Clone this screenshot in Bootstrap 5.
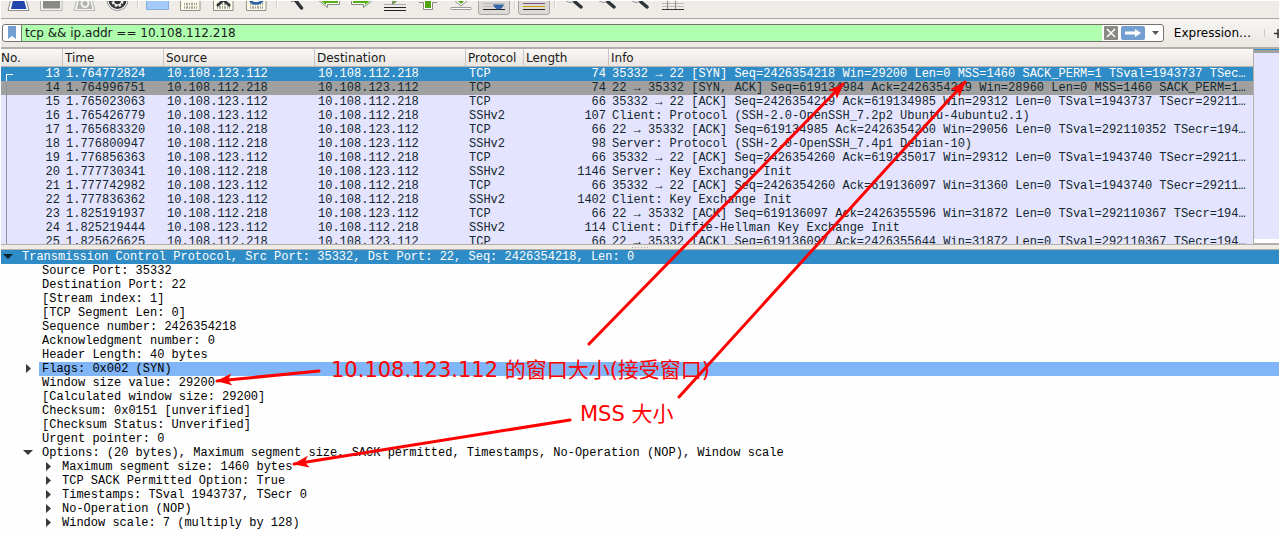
<!DOCTYPE html>
<html lang="en">
<head>
<meta charset="utf-8">
<meta name="viewport" content="width=device-width, initial-scale=1">
<title>Packet capture</title>
<link href="https://cdn.jsdelivr.net/npm/bootstrap@5.3.0/dist/css/bootstrap.min.css" rel="stylesheet">
<style>
  :root { --sel: #308cc6; --edge: #b4afa9; --chrome: #efebe7; --tcp: #e4e4ff; --ink: #12272e; }
  body { font: 12px/17px "DejaVu Sans", "Noto Sans CJK SC", sans-serif; color: #1a1a1a; background: #fefefe; padding: 1px 0 0 1px; overflow: hidden; }
  .toolbar { background: #efece8; border-bottom: 1px solid #aaa6a2; height: 18px; padding-left: 1px; overflow: hidden; }
  .tool { width: 33px; height: 17px; padding: 0; border: 0; background: none; }
  .tool svg { display: block; width: 33px; height: 17px; }
  .split { width: 7px; height: 9px; }
  .split::after { content: ""; display: block; width: 2px; height: 8px; margin-left: 3px; background: #fff; border-left: 1px solid #cfcac5; }
  .filterbar { background: linear-gradient(#f7f5f3, #ebe7e3); border-bottom: 2px solid var(--edge); height: 30px; padding: 0 0 0 1px; }
  .filterbox { border: 1px solid #76736f; border-radius: 3px; background: #fff; height: 18px; min-width: 0; overflow: hidden; }
  .filterbox input { border: 0; border-left: 1px solid #76736f; border-radius: 0; background: #afffaf; font: inherit; color: #1a1a1a; padding: 0 3px; height: 16px; min-width: 0; outline: 0; }
  .mini { border: 0; padding: 0; background: none; line-height: 0; }
  .expr { padding: 0 12px 0 2px; line-height: 18px; }
  .packets { height: 195px; }
  .listpane { width: 0; overflow: hidden; background: var(--tcp); border-right: 1px solid var(--edge); }
  .plist { width: 100%; table-layout: fixed; border-collapse: separate; border-spacing: 0; }
  .plist th { font-weight: 400; height: 18px; line-height: 16px; padding: 0 2px; border-right: 1px solid #cbc6c1; border-bottom: 1px solid #bab5b0; background: linear-gradient(#faf8f6, #e9e5e1); white-space: nowrap; }
  .plist th:first-child { padding-left: 0; }
  .plist th:last-child { border-right: 0; }
  .plist td { font: 12px/14px "Liberation Mono", monospace; height: 14px; padding: 0 3px; color: var(--ink); white-space: nowrap; overflow: hidden; text-overflow: ellipsis; }
  .plist .sel td { background: var(--sel); color: #fff; }
  .plist .synack td { background: #a0a0a0; }
  .c-no { width: 62px; } .c-time { width: 101px; } .c-addr { width: 151px; } .c-proto { width: 58px; } .c-len { width: 85px; }
  .plist td:first-child { position: relative; }
  .convo { position: absolute; left: 5px; top: 0; width: 7px; height: 14px; border-left: 1px solid #8a949c; }
  .sel .convo { top: 7px; height: 7px; border-color: #fff; border-top: 1px solid #fff; }
  .minimap { width: 25px; background: var(--tcp); border-top: 1px solid var(--sel); border-bottom: 1px solid var(--edge); }
  .minimap::before { content: ""; display: block; height: 3px; background: #a0a0a0; }
  .minimap::after { content: ""; display: block; height: 4px; background: #fff; }
  .grip { height: 6px; background: var(--chrome); border: solid var(--edge); border-width: 1px 0; }
  .grip span { width: 16px; height: 1px; background: repeating-linear-gradient(90deg, #aaa 0 1px, transparent 1px 3px); }
  .details { list-style: none; margin: 0; padding: 0; font: 12px/14px "Liberation Mono", monospace; color: #000; }
  .node { height: 14px; line-height: 14px; white-space: nowrap; }
  .twist { border: 0; background: none; padding: 0; width: 14px; height: 14px; color: #3a3a3a; line-height: 0; }
  .twist svg { display: block; }
  .lv0 { background: var(--sel); color: #fff; }
  .lv0 .twist { color: #0b2433; }
  .lv0 .txt { padding-left: 7px; }
  .lv1 .twist { margin-left: 20px; }
  .lv1 .txt { margin-left: 4px; padding-left: 3px; }
  .lv1.leaf .txt { margin-left: 38px; }
  .lv2 .twist { margin-left: 40px; }
  .lv2 .txt { padding-left: 7px; }
  .hot { background: #80b5f7; }
  .marks { position: absolute; left: 0; top: 0; pointer-events: none; }
  .note { position: absolute; color: #f00; font-size: 21px; line-height: 28px; white-space: nowrap; }
  .note-win { left: 331px; top: 356px; }
  .note-mss { left: 580px; top: 400px; }
</style>
</head>
<body class="position-relative">

<div class="toolbar d-flex" role="toolbar" aria-label="Capture tools">
  <button class="tool" aria-label="Start capture"><svg viewBox="0 1 33 17"><path d="M9 -1L6 10.500H27L24 -1Z" fill="#fff" stroke="#8b8b8b"/><path d="M11 0L9 9H24.500L22 0Z" fill="#2145ad"/></svg></button>
  <button class="tool" aria-label="Stop capture"><svg viewBox="0 1 33 17"><path d="M5.500 0V10.500H27V0" fill="#f3f3f1" stroke="#b3b3b0"/><path d="M8 0H25V8.500H8Z" fill="#898985"/></svg></button>
  <button class="tool" aria-label="Restart capture"><svg viewBox="0 1 33 17"><path d="M9 -1L6 10.500H27L24 -1Z" fill="#f3f3f1" stroke="#b8b8b4"/><path d="M11 0L9 9H24.500L22 0Z" fill="#b3b3af"/><circle cx="17" cy="3.500" r="3.500" fill="none" stroke="#f2f2ee" stroke-width="2"/></svg></button>
  <button class="tool" aria-label="Capture options"><svg viewBox="0 1 33 17"><circle cx="16.500" cy="0" r="10.500" fill="#fff" stroke="#8d8d8d"/><circle cx="16.500" cy="0" r="9" fill="#333"/><circle cx="16.500" cy="1" r="5" fill="none" stroke="#eee" stroke-width="2" stroke-dasharray="2.500 1.500"/><circle cx="16.500" cy="1" r="4" fill="none" stroke="#eee" stroke-width="1.500"/></svg></button>
  <span class="split"></span>
  <button class="tool" aria-label="Open"><svg viewBox="0 1 33 17"><path d="M5.500 0V9.500H27.500V0" fill="#a3caf9" stroke="#84aedf"/></svg></button>
  <button class="tool" aria-label="Save"><svg viewBox="0 1 33 17"><path d="M6.500 0V10.500H26V0" fill="#fbfbe8" stroke="#8f8f88"/><path d="M10 4H23M10 7.500H23" stroke="#a2a29a" stroke-width="2.500" stroke-dasharray="1 1 2 1"/></svg></button>
  <button class="tool" aria-label="Close"><svg viewBox="0 1 33 17"><path d="M6.500 0V10.500H26V0" fill="#fbfbe8" stroke="#8f8f88"/><path d="M10 4H23M10 7.500H23" stroke="#a2a29a" stroke-width="2.500" stroke-dasharray="1 1 2 1"/><path d="M10 6L16.500 0L23 6" fill="none" stroke="#2c3437" stroke-width="2.500"/></svg></button>
  <button class="tool" aria-label="Reload"><svg viewBox="0 1 33 17"><path d="M6.500 0V10.500H26V0" fill="#fbfbe8" stroke="#8f8f88"/><path d="M10 4H23M10 7.500H23" stroke="#a2a29a" stroke-width="2.500" stroke-dasharray="1 1 2 1"/><path d="M9.500 -1A7 6 0 0 0 23 -1" fill="none" stroke="#2f5fa5" stroke-width="2.500"/></svg></button>
  <span class="split"></span>
  <button class="tool" aria-label="Find packet"><svg viewBox="0 1 33 17"><path d="M11 1.500H14" stroke="#999"/><path d="M16 1L21.500 8" stroke="#2d3538" stroke-width="3.500" stroke-linecap="round"/></svg></button>
  <button class="tool" aria-label="Previous packet"><svg viewBox="0 1 33 17"><path d="M5 0L14.500 7.500V4.500H26.500V0" fill="#fff" stroke="#858b80"/><path d="M7 0L13 5V3H25V0Z" fill="#55b010"/></svg></button>
  <button class="tool" aria-label="Next packet"><svg viewBox="0 1 33 17"><path d="M27 0L17.500 7.500V4.500H5.500V0" fill="#fff" stroke="#858b80"/><path d="M25 0L19 5V3H7V0Z" fill="#55b010"/></svg></button>
  <button class="tool" aria-label="Go to packet"><svg viewBox="0 1 33 17"><path d="M5 4.500H27" stroke="#aaa"/><path d="M5 7.500H27M5 10.500H27" stroke="#222"/><path d="M13.500 0V4.500L19 0" fill="#55b010" stroke="#858b80"/></svg></button>
  <button class="tool" aria-label="First packet"><svg viewBox="0 1 33 17"><path d="M7 2.500H11.500V9.500H20.500V2.500H25" fill="#fff" stroke="#858b80"/><path d="M13 0H19V8H13Z" fill="#4fa30c"/></svg></button>
  <button class="tool" aria-label="Last packet"><svg viewBox="0 1 33 17"><path d="M9 0L16 6L23 0" fill="#fff" stroke="#858b80"/><path d="M12 0L16 4L20 0Z" fill="#4fa30c"/><rect x="5.500" y="7.500" width="21" height="2" rx="1" fill="#fff" stroke="#999"/></svg></button>
  <button class="tool" aria-label="Auto scroll" aria-pressed="true"><svg viewBox="0 1 33 17"><path d="M.500 0V12Q.500 14.500 3 14.500H29Q31.500 14.500 31.500 12V0" fill="#dcd9d6" stroke="#aaa5a0"/><path d="M5 3.500H27M5 6.500H27" stroke="#bbb"/><path d="M5 9.500H27" stroke="#222"/><path d="M15 4.500H26C25 7 23 9.500 20.500 9.500S16 7 15 4.500Z" fill="#3465a4"/></svg></button>
  <span class="split"></span>
  <button class="tool" aria-label="Colorize" aria-pressed="true"><svg viewBox="0 1 33 17"><path d="M.500 0V12Q.500 14.500 3 14.500H29Q31.500 14.500 31.500 12V0" fill="#dcd9d6" stroke="#aaa5a0"/><path d="M5 3.500H27" stroke="#75507b"/><path d="M5 6.500H27" stroke="#c4a000"/><path d="M5 9.500H27" stroke="#222"/></svg></button>
  <span class="split"></span>
  <button class="tool" aria-label="Zoom in"><svg viewBox="0 1 33 17"><path d="M8 1Q12 4 16 1.500" fill="none" stroke="#999"/><path d="M17 2L23 7" stroke="#2d3538" stroke-width="3.500" stroke-linecap="round"/></svg></button>
  <button class="tool" aria-label="Zoom out"><svg viewBox="0 1 33 17"><path d="M8 1Q12 4 16 1.500" fill="none" stroke="#999"/><path d="M17 2L23 7" stroke="#2d3538" stroke-width="3.500" stroke-linecap="round"/></svg></button>
  <button class="tool" aria-label="Zoom reset"><svg viewBox="0 1 33 17"><path d="M8 1Q12 4 16 1.500" fill="none" stroke="#999"/><path d="M17 2L23 7" stroke="#2d3538" stroke-width="3.500" stroke-linecap="round"/></svg></button>
  <button class="tool" aria-label="Resize columns"><svg viewBox="0 1 33 17"><path d="M5 3.500H27M5 6.500H27" stroke="#bbb"/><path d="M5 9.500H27" stroke="#333"/><path d="M10.500 0V9M18.500 0V9" stroke="#888"/></svg></button>
</div>

<div class="filterbar d-flex align-items-center">
  <div class="filterbox d-flex align-items-center flex-grow-1">
    <button class="mini" aria-label="Bookmarks"><svg width="18" height="16"><path d="M5 1H13V14L9 11L5 14Z" fill="#729fcf"/></svg></button>
    <input class="flex-grow-1" type="text" aria-label="Display filter" value="tcp &amp;&amp; ip.addr == 10.108.112.218">
    <button class="mini" aria-label="Clear"><svg width="18" height="16"><rect x="2" y="1" width="14" height="14" rx="1" fill="#888a85"/><path d="M5 4L13 12M13 4L5 12" stroke="#fff" stroke-width="1.500"/></svg></button>
    <button class="mini" aria-label="Apply"><svg width="26" height="16"><rect x="1" y="1" width="24" height="14" rx="2" fill="#729fcf"/><path d="M5 6.500H15V4L21 8L15 12V9.500H5Z" fill="#fff"/></svg></button>
    <button class="mini" aria-label="History"><svg width="17" height="16"><path d="M6 6H13L9.500 10Z" fill="#555"/></svg></button>
  </div>
  <button class="mini expr text-nowrap ms-2">Expression…</button>
  <button class="mini" aria-label="Add filter button"><svg width="16" height="18"><path d="M1.500 5V13" stroke="#ccc"/><path d="M11 9.500H16M15 5V14" stroke="#333" stroke-width="1.500"/></svg></button>
</div>

<main>
  <div class="packets d-flex">
    <div class="listpane flex-grow-1">
      <table class="plist">
        <colgroup><col class="c-no"><col class="c-time"><col class="c-addr"><col class="c-addr"><col class="c-proto"><col class="c-len"><col></colgroup>
        <thead><tr><th>No.</th><th>Time</th><th>Source</th><th>Destination</th><th>Protocol</th><th>Length</th><th>Info</th></tr></thead>
        <tbody id="rows"></tbody>
      </table>
    </div>
    <div class="minimap flex-shrink-0 d-flex flex-column justify-content-between"></div>
  </div>
  <div class="grip d-flex align-items-center justify-content-center"><span></span></div>

  <ul class="details" id="tree"></ul>
</main>

<svg class="marks" width="1279" height="538" fill="#f00" stroke="#f00" stroke-width="3" stroke-linecap="round">
  <defs><marker id="tip" markerUnits="userSpaceOnUse" markerWidth="18" markerHeight="12" refX="15" refY="6" orient="auto" viewBox="0 0 18 12"><path d="M0 0L16 6L0 12L4 6Z" stroke="none"/></marker></defs>
  <path d="M589 344L843 84" marker-end="url(#tip)"/>
  <path d="M679 397L965 82" marker-end="url(#tip)"/>
  <path d="M319 371L217 381" marker-end="url(#tip)"/>
  <path d="M570 420L294 464" marker-end="url(#tip)"/>
</svg>
<div class="note note-win">10.108.123.112 的窗口大小(接受窗口)</div>
<div class="note note-mss">MSS 大小</div>

<script>
  const A = '10.108.123.112', B = '10.108.112.218';
  const packets = [
    [13, '1.764772824', A, B, 'TCP', 74, '35332 → 22 [SYN] Seq=2426354218 Win=29200 Len=0 MSS=1460 SACK_PERM=1 TSval=1943737 TSecr=0 WS=128', 'sel'],
    [14, '1.764996751', B, A, 'TCP', 74, '22 → 35332 [SYN, ACK] Seq=619134984 Ack=2426354219 Win=28960 Len=0 MSS=1460 SACK_PERM=1 TSval=292110352', 'synack'],
    [15, '1.765023063', A, B, 'TCP', 66, '35332 → 22 [ACK] Seq=2426354219 Ack=619134985 Win=29312 Len=0 TSval=1943737 TSecr=292110352'],
    [16, '1.765426779', A, B, 'SSHv2', 107, 'Client: Protocol (SSH-2.0-OpenSSH_7.2p2 Ubuntu-4ubuntu2.1)'],
    [17, '1.765683320', B, A, 'TCP', 66, '22 → 35332 [ACK] Seq=619134985 Ack=2426354260 Win=29056 Len=0 TSval=292110352 TSecr=1943737'],
    [18, '1.776800947', B, A, 'SSHv2', 98, 'Server: Protocol (SSH-2.0-OpenSSH_7.4p1 Debian-10)'],
    [19, '1.776856363', A, B, 'TCP', 66, '35332 → 22 [ACK] Seq=2426354260 Ack=619135017 Win=29312 Len=0 TSval=1943740 TSecr=292110355'],
    [20, '1.777730341', B, A, 'SSHv2', 1146, 'Server: Key Exchange Init'],
    [21, '1.777742982', A, B, 'TCP', 66, '35332 → 22 [ACK] Seq=2426354260 Ack=619136097 Win=31360 Len=0 TSval=1943740 TSecr=292110355'],
    [22, '1.777836362', A, B, 'SSHv2', 1402, 'Client: Key Exchange Init'],
    [23, '1.825191937', B, A, 'TCP', 66, '22 → 35332 [ACK] Seq=619136097 Ack=2426355596 Win=31872 Len=0 TSval=292110367 TSecr=1943740'],
    [24, '1.825219444', A, B, 'SSHv2', 114, 'Client: Diffie-Hellman Key Exchange Init'],
    [25, '1.825626625', B, A, 'TCP', 66, '22 → 35332 [ACK] Seq=619136097 Ack=2426355644 Win=31872 Len=0 TSval=292110367 TSecr=1943752']
  ];
  document.getElementById('rows').innerHTML = packets.map(p =>
    `<tr class="${p[7] || ''}">` + p.slice(0, 7).map((v, i) =>
      `<td${i === 0 || i === 5 ? ' class="text-end"' : ''}>${i === 0 ? '<span class="convo"></span>' : ''}${v}</td>`).join('') + '</tr>').join('');

  // level, state (o = open, c = closed, blank = leaf), text
  const nodes = [
    [0, 'o', 'Transmission Control Protocol, Src Port: 35332, Dst Port: 22, Seq: 2426354218, Len: 0'],
    [1, '', 'Source Port: 35332'], [1, '', 'Destination Port: 22'], [1, '', '[Stream index: 1]'],
    [1, '', '[TCP Segment Len: 0]'], [1, '', 'Sequence number: 2426354218'], [1, '', 'Acknowledgment number: 0'],
    [1, '', 'Header Length: 40 bytes'], [1, 'c', 'Flags: 0x002 (SYN)', 'hot'], [1, '', 'Window size value: 29200'],
    [1, '', '[Calculated window size: 29200]'], [1, '', 'Checksum: 0x0151 [unverified]'],
    [1, '', '[Checksum Status: Unverified]'], [1, '', 'Urgent pointer: 0'],
    [1, 'o', 'Options: (20 bytes), Maximum segment size, SACK permitted, Timestamps, No-Operation (NOP), Window scale'],
    [2, 'c', 'Maximum segment size: 1460 bytes'], [2, 'c', 'TCP SACK Permitted Option: True'],
    [2, 'c', 'Timestamps: TSval 1943737, TSecr 0'], [2, 'c', 'No-Operation (NOP)'], [2, 'c', 'Window scale: 7 (multiply by 128)']
  ];
  const arrow = { o: 'M2 4H12L7 9Z', c: 'M5 2V11L10 6.5Z' };
  document.getElementById('tree').innerHTML = nodes.map(([lv, st, text, hot]) =>
    `<li class="node d-flex lv${lv} ${st ? '' : 'leaf'}">` +
    (st ? `<button class="twist" aria-label="Toggle"><svg width="14" height="14"><path d="${arrow[st]}" fill="currentColor"/></svg></button>` : '') +
    `<span class="txt flex-grow-1 ${hot || ''}">${text}</span></li>`).join('');
</script>
<script src="https://cdn.jsdelivr.net/npm/bootstrap@5.3.0/dist/js/bootstrap.bundle.min.js"></script>
</body>
</html>
